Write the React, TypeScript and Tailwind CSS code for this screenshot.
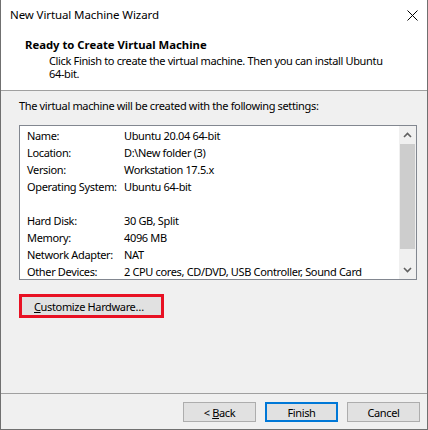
import React from "react";

const rows: [string, string][] = [
  ["Name:", "Ubuntu 20.04 64-bit"],
  ["Location:", "D:\\New folder (3)"],
  ["Version:", "Workstation 17.5.x"],
  ["Operating System:", "Ubuntu 64-bit"],
  ["", ""],
  ["Hard Disk:", "30 GB, Split"],
  ["Memory:", "4096 MB"],
  ["Network Adapter:", "NAT"],
  ["Other Devices:", "2 CPU cores, CD/DVD, USB Controller, Sound Card"],
];

const App = () => {
  return (
    <div className="w-[428px] h-[430px] bg-[#f0f0f0] border-x border-b border-[#707070] flex flex-col text-[11px] tracking-[-0.35px] text-black font-['Noto_Sans',sans-serif] overflow-hidden whitespace-nowrap">
      {/* title bar */}
      <div className="h-[30px] bg-white flex items-center justify-between pl-[9px] pr-[9px] shrink-0">
        <span className="leading-none text-[11.5px] tracking-[-0.1px]">New Virtual Machine Wizard</span>
        <svg width="11" height="11" viewBox="0 0 11 11" className="mt-px">
          <path d="M0.5 0.5 L10.5 10.5 M10.5 0.5 L0.5 10.5" stroke="#000" strokeWidth="1" />
        </svg>
      </div>

      {/* header */}
      <div className="h-[53px] bg-white pt-[7px] shrink-0 border-b border-[#a0a0a0] box-content">
        <div className="pl-[24px] font-bold leading-[16px] text-[11.3px] tracking-normal">Ready to Create Virtual Machine</div>
        <div className="pl-[48px] mt-[1px] leading-[13px]">
          Click Finish to create the virtual machine. Then you can install Ubuntu
          <br />
          64-bit.
        </div>
      </div>

      {/* body */}
      <div className="flex-1 pl-[18px] pr-[10px] pt-[7px] border-b border-[#a0a0a0]">
        <div className="leading-[16px]">The virtual machine will be created with the following settings:</div>
        <div className="mt-[11px] w-[398px] h-[155px] border border-[#828790] bg-white flex">
          <div className="flex-1 pt-[2px] pl-[7px]">
            {rows.map(([k, v], i) => (
              <div key={i} className="flex h-[17px] items-center">
                <span className="w-[97px] shrink-0">{k}</span>
                <span>{v}</span>
              </div>
            ))}
          </div>
          <div className="w-[17px] bg-[#f0f0f0] flex flex-col">
            <div className="h-[18px] flex items-center justify-center">
              <svg width="9" height="6" viewBox="0 0 9 6">
                <path d="M1 5 L4.5 1.5 L8 5" stroke="#606060" strokeWidth="1.6" fill="none" />
              </svg>
            </div>
            <div className="mx-px h-[105px] bg-[#cdcdcd]" />
            <div className="flex-1" />
            <div className="h-[18px] flex items-center justify-center">
              <svg width="9" height="6" viewBox="0 0 9 6">
                <path d="M1 1 L4.5 4.5 L8 1" stroke="#606060" strokeWidth="1.6" fill="none" />
              </svg>
            </div>
          </div>
        </div>
        <div className="mt-[14px] w-[145px] h-[24px] border-[3px] border-[#e81123] bg-[#e1e1e1] flex items-center pl-[12px]">
          <span className="leading-none">
            <span className="underline">C</span>ustomize Hardware…
          </span>
        </div>
      </div>

      {/* footer */}
      <div className="h-[35px] shrink-0 flex justify-end items-start pt-[8px] pr-[7px] gap-[9px]">
        <div className="w-[73px] h-[20px] bg-[#e1e1e1] border border-[#adadad] flex items-center justify-center leading-none">
          &lt;&nbsp;<span className="underline">B</span>ack
        </div>
        <div className="w-[73px] h-[20px] bg-[#e1e1e1] border-2 border-[#0078d7] flex items-center justify-center leading-none">
          Finish
        </div>
        <div className="w-[73px] h-[20px] bg-[#e1e1e1] border border-[#adadad] flex items-center justify-center leading-none">
          Cancel
        </div>
      </div>
    </div>
  );
};

export default App;
